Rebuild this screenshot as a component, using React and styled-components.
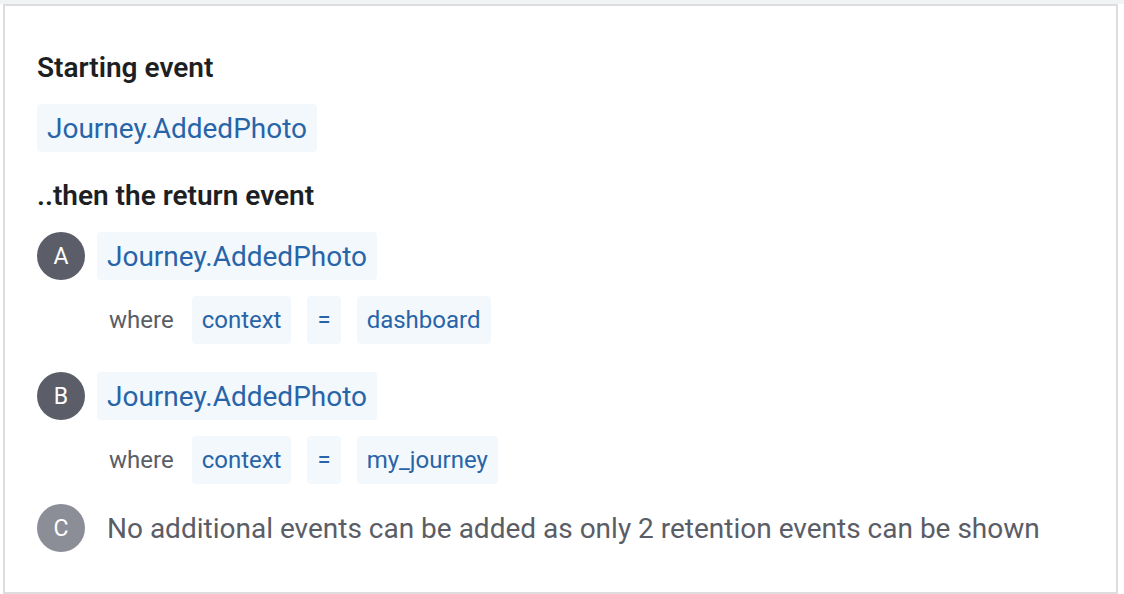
import React from 'react'
import styled, { createGlobalStyle } from 'styled-components'

const GlobalStyle = createGlobalStyle`
  body {
    margin: 0;
    background: #ffffff;
    font-family: Roboto, "Liberation Sans", Arial, sans-serif;
    overflow: hidden;
  }
`

const TopStrip = styled.div`
  height: 4px;
  background: #f2f3f5;
`

const Card = styled.div`
  margin: 0 6px 0 3px;
  height: 590px;
  box-sizing: border-box;
  border: 2px solid #dddde0;
  padding: 44px 32px 0 32px;
  display: flex;
  flex-direction: column;
  align-items: flex-start;
`

const Heading = styled.div`
  font-size: 28px;
  line-height: 36px;
  font-weight: 600;
  color: #1e1f23;
  margin-bottom: 18px;
`

const Chip = styled.span`
  display: inline-flex;
  align-items: center;
  height: 48px;
  padding: 0 10px;
  border-radius: 4px;
  background: #f3f8fd;
  color: #2864a8;
  font-size: ${p => (p.$small ? '24px' : '28px')};
  white-space: nowrap;
`

const StartChip = styled(Chip)`
  margin-bottom: 26px;
`

const EventRow = styled.div`
  display: flex;
  align-items: center;
  gap: 12px;
  margin-top: ${p => p.$top || 0}px;
`

const Badge = styled.div`
  width: 48px;
  height: 48px;
  border-radius: 50%;
  background: ${p => (p.$muted ? '#8c8e97' : '#5b5e68')};
  color: #ffffff;
  font-size: 23px;
  display: flex;
  align-items: center;
  justify-content: center;
  flex-shrink: 0;
`

const WhereRow = styled.div`
  display: flex;
  align-items: center;
  gap: 16px;
  margin: 16px 0 0 72px;
`

const WhereLabel = styled.span`
  font-size: 24px;
  color: #5a5d66;
  margin-right: 2px;
`

const Notice = styled.span`
  font-size: 28px;
  color: #5a5d66;
  padding: 0 10px;
  white-space: nowrap;
`

const events = [
  { letter: 'A', name: 'Journey.AddedPhoto', prop: 'context', value: 'dashboard', top: 0 },
  { letter: 'B', name: 'Journey.AddedPhoto', prop: 'context', value: 'my_journey', top: 28 },
]

export default function App() {
  return (
    <>
      <GlobalStyle />
      <TopStrip />
      <Card>
        <Heading>Starting event</Heading>
        <StartChip>Journey.AddedPhoto</StartChip>
        <Heading>..then the return event</Heading>
        {events.map(ev => (
          <React.Fragment key={ev.letter}>
            <EventRow $top={ev.top}>
              <Badge>{ev.letter}</Badge>
              <Chip>{ev.name}</Chip>
            </EventRow>
            <WhereRow>
              <WhereLabel>where</WhereLabel>
              <Chip $small>{ev.prop}</Chip>
              <Chip $small>=</Chip>
              <Chip $small>{ev.value}</Chip>
            </WhereRow>
          </React.Fragment>
        ))}
        <EventRow $top={20}>
          <Badge $muted>C</Badge>
          <Notice>No additional events can be added as only 2 retention events can be shown</Notice>
        </EventRow>
      </Card>
    </>
  )
}
